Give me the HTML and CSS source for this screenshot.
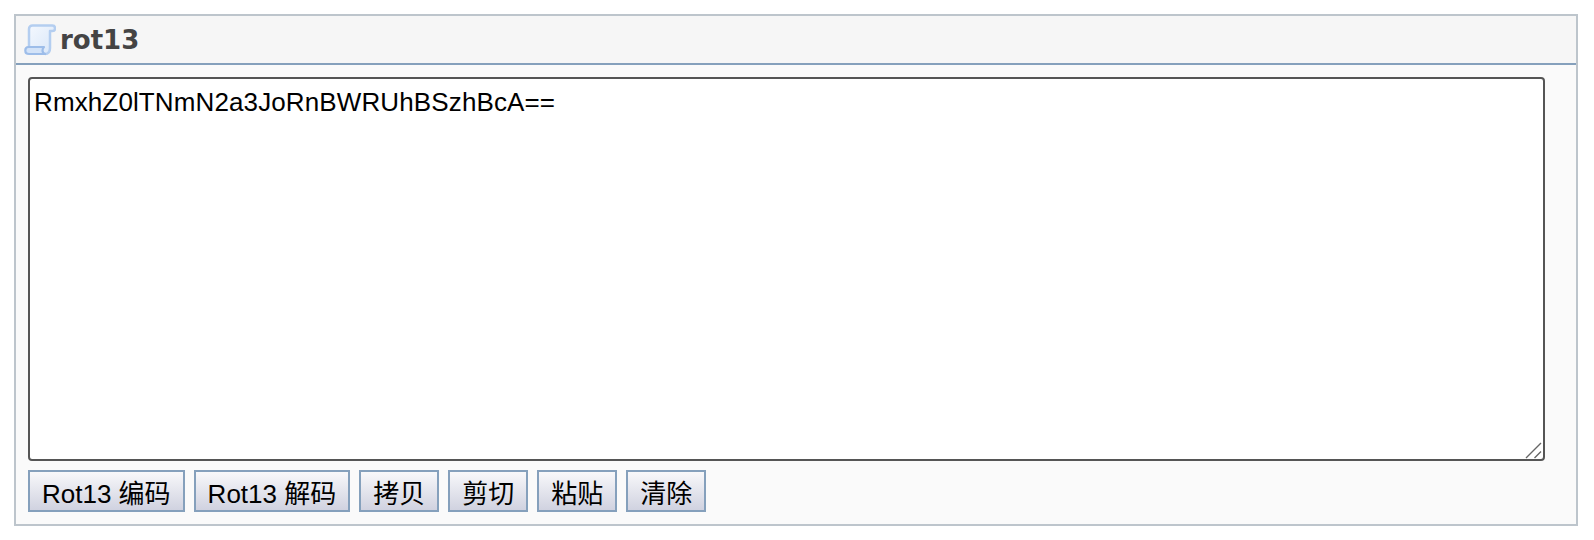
FILE: index.html
```html
<!DOCTYPE html>
<html lang="zh">
<head>
  <meta charset="UTF-8">
  <title>rot13</title>
  <link rel="stylesheet" href="styles.css">
</head>
<body>

<div class="panel">
  <div class="panel-header">
    <svg class="scroll-icon" width="32" height="32" viewBox="0 0 32 32">
      <defs>
        <linearGradient id="paper" x1="0" y1="0" x2="1" y2="1">
          <stop offset="0" stop-color="#f4f8fe"/>
          <stop offset="1" stop-color="#d8e6f8"/>
        </linearGradient>
      </defs>
      <path d="M5 24V5C5 3 6.500 1.500 8.500 1.500H28.500C30.300 1.500 31 3 31 4.500C31 6 30 7 28.500 7H26V24C26 28 24.500 30 21 30" fill="url(#paper)" stroke="#b4cef0" stroke-width="2.500" stroke-linejoin="round"/>
      <path d="M1.300 26.500C1.300 24.300 2.800 23 4.500 23H20C19 24 18.500 25.200 18.500 26.500C18.500 27.900 19.300 29.200 21 30H5C2.800 30 1.300 28.600 1.300 26.500Z" fill="#d3e3f8" stroke="#9dbde9" stroke-width="2.200" stroke-linejoin="round"/>
    </svg>
    <span class="panel-title">rot13</span>
  </div>
  <div class="panel-body">
    <div class="input-wrap">
      <textarea class="code-input" spellcheck="false">RmxhZ0lTNmN2a3JoRnBWRUhBSzhBcA==</textarea>
      <svg class="resize-grip" width="18" height="18" viewBox="0 0 18 18">
        <path d="M1 17L16 2M9.500 17L16 10.500" stroke="#666" stroke-width="1.400" fill="none"/>
      </svg>
    </div>
    <div class="actions">
      <button type="button" class="button">Rot13 编码</button>
      <button type="button" class="button">Rot13 解码</button>
      <button type="button" class="button">拷贝</button>
      <button type="button" class="button">剪切</button>
      <button type="button" class="button">粘贴</button>
      <button type="button" class="button">清除</button>
    </div>
  </div>
</div>

</body>
</html>
```

FILE: styles.css
```css
html, body {
  margin: 0;
  padding: 0;
  background: #fff;
}
body {
  font-family: "Liberation Sans", "Noto Sans CJK SC", sans-serif;
  padding: 14px 16px 14px 14px;
}
.panel {
  border: 2px solid #bdc5cc;
  background: #fafafa;
  height: 512px;
  box-sizing: border-box;
}
.panel-header {
  display: flex;
  align-items: center;
  height: 47px;
  padding-left: 8px;
  background: #f6f6f6;
  border-bottom: 2px solid #85a0bc;
}
.scroll-icon {
  flex: none;
  margin-right: 4px;
}
.panel-title {
  font-family: "DejaVu Sans", sans-serif;
  font-size: 26px;
  font-weight: bold;
  color: #444;
}
.panel-body {
  padding: 12px 12px 0 12px;
}
.input-wrap {
  position: relative;
  width: 1517px;
}
.code-input {
  display: block;
  box-sizing: border-box;
  width: 100%;
  height: 384px;
  padding: 8px 4px;
  border: 2px solid #555;
  border-radius: 4px;
  background: #fff;
  color: #000;
  font-family: "Liberation Sans", "Noto Sans CJK SC", sans-serif;
  font-size: 26px;
  line-height: 30px;
  letter-spacing: 0.12px;
  outline: none;
  resize: none;
}
.resize-grip {
  position: absolute;
  right: 2px;
  bottom: 2px;
}
.actions {
  display: flex;
  gap: 9px;
  margin-top: 9px;
}
.button {
  box-sizing: border-box;
  min-width: 80px;
  height: 42px;
  padding: 0 12px;
  border: 2px solid #85a0bc;
  border-radius: 0;
  background: linear-gradient(to bottom, #f8f8fa, #d0d2e0);
  color: #000;
  font-family: "Liberation Sans", "Noto Sans CJK SC", sans-serif;
  font-size: 26px;
}
```
